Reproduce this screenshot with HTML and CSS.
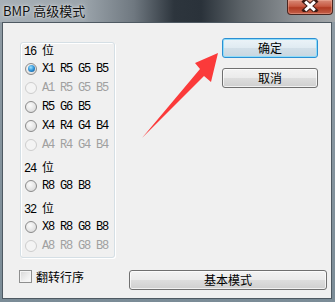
FILE: index.html
```html
<!DOCTYPE html>
<html lang="zh-CN">
  <head>
    <meta charset="UTF-8" />
    <title>BMP 高级模式</title>
    <link rel="stylesheet" href="styles.css">
  </head>
  <body>
    <div class="window">
      <div class="titlebar">
        <span class="title">BMP 高级模式</span>
        <div class="close-btn">
          <svg width="18" height="12" viewBox="0 0 18 12">
            <path d="M4 1.5 L14 10.5 M14 1.5 L4 10.5" stroke="#3a1a14" stroke-width="5" stroke-linecap="square"/>
            <path d="M4.2 1.7 L13.8 10.3 M13.8 1.7 L4.2 10.3" stroke="#fff" stroke-width="3"/>
          </svg>
        </div>
      </div>

      <div class="client">
        <fieldset class="groupbox">
          <div class="head">16 位</div>
          <label class="opt"><span class="radio checked"></span>X1 R5 G5 B5</label>
          <label class="opt off"><span class="radio"></span>A1 R5 G5 B5</label>
          <label class="opt"><span class="radio"></span>R5 G6 B5</label>
          <label class="opt"><span class="radio"></span>X4 R4 G4 B4</label>
          <label class="opt off"><span class="radio"></span>A4 R4 G4 B4</label>

          <div class="head gap">24 位</div>
          <label class="opt"><span class="radio"></span>R8 G8 B8</label>

          <div class="head gap">32 位</div>
          <label class="opt"><span class="radio"></span>X8 R8 G8 B8</label>
          <label class="opt off"><span class="radio"></span>A8 R8 G8 B8</label>
        </fieldset>

        <div class="side">
          <button class="btn default">确定</button>
          <button class="btn">取消</button>
        </div>

        <label class="check"><span class="box"></span>翻转行序</label>
        <button class="btn wide">基本模式</button>
      </div>

      <!-- red annotation arrow drawn over the dialog -->
      <svg class="arrow" width="335" height="302" viewBox="0 0 335 302">
        <polygon points="218,53 195,63 200,69 142,138 204,76 211,82" fill="#fb3a3a"/>
      </svg>
    </div>
  </body>
</html>
```

FILE: styles.css
```css
body {
  margin: 0;
  background: #8d9aa3;
}
.window {
  position: relative;
  width: 335px;
  height: 302px;
  display: flex;
  flex-direction: column;
  background: linear-gradient(to bottom, #8f9ba4, #7b8c97);
  font-family: "Noto Sans CJK SC", "Liberation Sans", sans-serif;
  font-size: 12px;
  overflow: hidden;
}
.titlebar {
  height: 22px;
  display: flex;
  justify-content: space-between;
  align-items: flex-start;
  background: linear-gradient(to right, #a7b0b7 0%, #9ba4ab 25%, #6f7880 40%, #2d353d 52%, #2a323a 60%, #5c6368 72%, #8d9296 88%, #a2a6a9 100%);
}
.title {
  padding: 3px 0 0 3px;
  line-height: 16px;
  font-size: 13px;
  color: #101010;
  text-shadow: 0 0 5px rgba(255, 255, 255, 0.7), 0 0 2px rgba(255, 255, 255, 0.6);
}
.close-btn {
  width: 44px;
  height: 14px;
  margin-right: 2px;
  display: flex;
  justify-content: center;
  align-items: flex-start;
  border: 1px solid #4a2620;
  border-top: none;
  border-radius: 0 0 4px 4px;
  background: linear-gradient(to bottom, #d88a78 0%, #c75a43 45%, #b03a22 55%, #c4604a 100%);
  box-shadow: inset 0 0 0 1px rgba(255, 200, 180, 0.35);
}
.close-btn svg {
  margin-top: 0;
}
.client {
  flex: 1;
  margin: 0 3px 3px 2px;
  border: 1px solid #4e5962;
  background: #f0f0f0;
  padding: 15px 4px 8px 17px;
  display: grid;
  grid-template-columns: 95px 198px;
  grid-template-rows: auto 20px;
  column-gap: 14px;
  row-gap: 12px;
  align-items: start;
}
.groupbox {
  margin: 4px 0 0;
  padding: 2px 0 2px 3px;
  height: 216px;
  box-sizing: border-box;
  border: 1px solid #d5dfe5;
  border-radius: 3px;
  box-shadow: inset 1px 1px 0 #fff, 1px 1px 0 #fff;
  min-width: 0;
}
.head {
  height: 14px;
  line-height: 14px;
  font-family: "Liberation Mono", "Noto Sans CJK SC", monospace;
  letter-spacing: -1.2px;
  color: #000;
}
.head.gap {
  margin-top: 8px;
}
.opt {
  height: 19px;
  display: flex;
  align-items: center;
  font-family: "Liberation Mono", monospace;
  letter-spacing: -1.2px;
  color: #000;
  white-space: pre;
}
.opt.off {
  color: #a0a0a0;
}
.radio {
  width: 10px;
  height: 10px;
  margin: 0 5px 0 1px;
  border: 1px solid #8b8b8b;
  border-radius: 50%;
  background: radial-gradient(circle at 40% 35%, #fbfbfb 0%, #e4e4e4 60%, #cfcfcf 100%);
  position: relative;
  flex: none;
}
.opt.off .radio {
  border-color: #cdcdcd;
  background: #f4f4f4;
}
.radio.checked::after {
  content: "";
  position: absolute;
  left: 1.5px;
  top: 1.5px;
  width: 7px;
  height: 7px;
  border-radius: 50%;
  background: radial-gradient(circle at 40% 35%, #9fe2ff 0%, #2f93d8 50%, #0b4a86 100%);
}
.side {
  display: flex;
  flex-direction: column;
  gap: 10px;
  margin-left: 93px;
  width: 96px;
}
.btn {
  height: 20px;
  padding: 0;
  border: 1px solid #707070;
  border-radius: 3px;
  background: linear-gradient(to bottom, #f3f3f3 0%, #ebebeb 48%, #dddddd 52%, #cfcfcf 100%);
  box-shadow: inset 0 0 0 1px rgba(255, 255, 255, 0.7);
  font-family: "Noto Sans CJK SC", sans-serif;
  font-size: 12px;
  line-height: 16px;
  color: #000;
}
.btn.default {
  border-color: #2b8fd3;
  background: linear-gradient(to bottom, #ebf3f8 0%, #e0ebf2 48%, #d2dfe8 52%, #c8d6e0 100%);
  box-shadow: inset 0 0 0 1px #8fdcf8;
}
.btn.wide {
  width: 198px;
}
.check {
  display: flex;
  align-items: center;
  margin-left: -1px;
  height: 13px;
  gap: 4px;
  font-size: 12px;
  color: #000;
}
.box {
  width: 11px;
  height: 11px;
  border: 1px solid #8e8f8f;
  background: linear-gradient(135deg, #d6d6d6 0%, #efefef 60%, #fbfbfb 100%);
  box-shadow: inset 0 0 0 1px #f4f4f4;
  flex: none;
}
.arrow {
  position: absolute;
  left: 0;
  top: 0;
  pointer-events: none;
}
```
